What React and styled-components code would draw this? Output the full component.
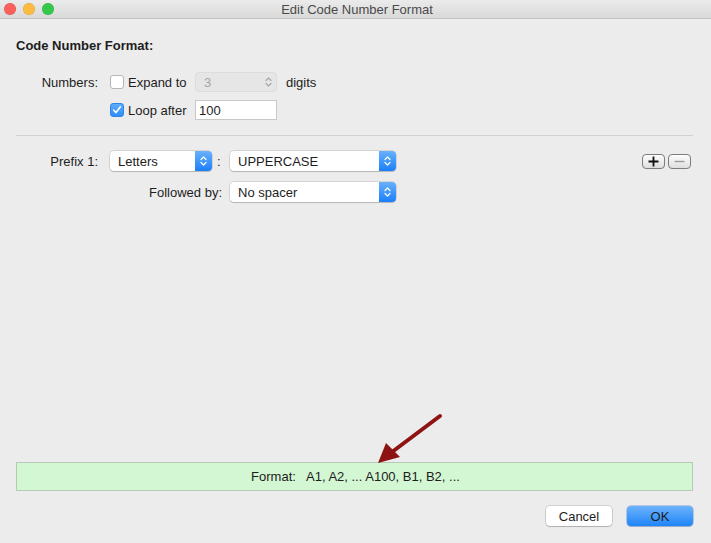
import React from 'react'
import styled, { createGlobalStyle } from 'styled-components'

const Global = createGlobalStyle`
  html, body { margin:0; padding:0; }
  body {
    font-family:"Liberation Sans", Arial, sans-serif;
    font-size:13px;
    color:#1d1d1d;
    background:#ececec;
  }
`

const Window = styled.div`
  position:relative;
  width:711px;
  height:543px;
  display:flex;
  flex-direction:column;
  background:#ececec;
  overflow:hidden;
`
const TitleBar = styled.div`
  height:18px;
  flex-shrink:0;
  display:grid;
  grid-template-columns:80px 1fr 80px;
  align-items:center;
  background:linear-gradient(#ebebeb, #d9d9d9);
  border-bottom:1px solid #c4c4c4;
`
const Lights = styled.div`
  display:flex;
  gap:7px;
  padding-left:4px;
`
const Light = styled.span`
  width:12px;
  height:12px;
  border-radius:50%;
  background:${({c})=>c};
  box-shadow:inset 0 0 0 0.5px rgba(0,0,0,0.15);
`
const Title = styled.div`
  text-align:center;
  color:#4a4a4a;
  font-size:13px;
  padding-left:3px;
`
const Content = styled.div`
  flex:1;
  display:flex;
  flex-direction:column;
  padding:19px 18px 17px 16px;
`
const Heading = styled.div`
  font-weight:bold;
  line-height:16px;
  margin-bottom:18px;
`
const NumberGrid = styled.div`
  display:grid;
  grid-template-columns:94px 85px 82px auto;
  grid-auto-rows:20px;
  row-gap:8px;
  align-items:center;
`
const Label = styled.div`
  text-align:right;
  padding-right:${({pr})=>pr ?? 12}px;
  grid-column:${({span})=>span || 'auto'};
  white-space:nowrap;
`
const CheckLabel = styled.label`
  display:flex;
  align-items:center;
  gap:4px;
  grid-column:${({col})=>col || 'auto'};
`
const Box = styled.span`
  width:14px;
  height:14px;
  box-sizing:border-box;
  border-radius:3px;
  display:flex;
  align-items:center;
  justify-content:center;
  background:${({checked})=>checked ? 'linear-gradient(#5eacfc,#2f8df8)' : '#fff'};
  border:1px solid ${({checked})=>checked ? '#2f84e8' : '#b5b5b5'};
`
const Stepper = styled.div`
  height:20px;
  box-sizing:border-box;
  border-radius:4px;
  background:#e6e6e6;
  border:1px solid #dcdcdc;
  display:flex;
  align-items:center;
  justify-content:space-between;
  padding:0 4px 0 8px;
  color:#a5a5a5;
`
const Field = styled.div`
  height:20px;
  box-sizing:border-box;
  background:#fff;
  border:1px solid #c8c8c8;
  display:flex;
  align-items:center;
  padding-left:3px;
`
const Suffix = styled.span`
  padding-left:9px;
`
const Separator = styled.div`
  height:1px;
  background:#d1d1d1;
  margin:15px 0 15px;
`
const PrefixGrid = styled.div`
  display:grid;
  grid-template-columns:94px 102px 18px 166px 1fr auto;
  grid-auto-rows:20px;
  row-gap:11px;
  align-items:center;
`
const Colon = styled.span`
  padding-left:5px;
`
const Select = styled.div`
  height:20px;
  box-sizing:border-box;
  border-radius:4px;
  background:#fff;
  box-shadow:0 0 0 0.5px rgba(0,0,0,0.2), 0 1px 1px rgba(0,0,0,0.15);
  display:flex;
  align-items:center;
  justify-content:space-between;
  padding-left:8px;
  overflow:hidden;
  grid-column:${({col})=>col || 'auto'};
`
const Cap = styled.span`
  width:17px;
  height:20px;
  display:flex;
  align-items:center;
  justify-content:center;
  background:linear-gradient(#69b1fb,#1b7ffa);
`
const SmallButtons = styled.div`
  display:flex;
  gap:3px;
  padding-top:1px;
  margin-right:2px;
`
const SmallButton = styled.span`
  width:23px;
  height:15px;
  box-sizing:border-box;
  border-radius:4px;
  border:1px solid #7c7c7c;
  background:linear-gradient(#fdfdfd,#dedede);
  display:flex;
  align-items:center;
  justify-content:center;
`
const Spacer = styled.div`
  flex:1;
`
const FormatBar = styled.div`
  height:29px;
  box-sizing:border-box;
  background:#d3f6d3;
  border:1px solid #b9c9b9;
  display:flex;
  align-items:center;
  justify-content:center;
  padding-left:2px;
  white-space:pre;
`
const Actions = styled.div`
  display:flex;
  justify-content:flex-end;
  gap:15px;
  margin-top:15px;
`
const Button = styled.button`
  width:66px;
  height:20px;
  border:none;
  border-radius:4px;
  font-family:inherit;
  font-size:13px;
  color:#1d1d1d;
  padding:0;
  background:${({primary})=>primary ? 'linear-gradient(#6cb3fb,#1f84f8)' : '#fff'};
  box-shadow:${({primary})=>primary
    ? '0 0 0 0.5px rgba(20,90,200,0.5), 0 1px 1px rgba(0,0,0,0.15)'
    : '0 0 0 0.5px rgba(0,0,0,0.25), 0 1px 1px rgba(0,0,0,0.15)'};
`
const Arrow = styled.svg`
  position:absolute;
  left:370px;
  top:410px;
  pointer-events:none;
`

const Check = () => (
  <svg width="10" height="10" viewBox="0 0 10 10">
    <path d="M1.8 5.2 L4 7.6 L8.4 1.8" fill="none" stroke="#fff" strokeWidth="1.6" strokeLinecap="round" strokeLinejoin="round"/>
  </svg>
)

const Updown = ({color}) => (
  <svg width="7" height="12" viewBox="0 0 7 12">
    <path d="M1 4.5 L3.5 2 L6 4.5 M1 7.5 L3.5 10 L6 7.5" fill="none" stroke={color} strokeWidth="1.2" strokeLinecap="round" strokeLinejoin="round"/>
  </svg>
)

const Popup = ({children, col}) => (
  <Select col={col}>
    <span>{children}</span>
    <Cap><Updown color="#fff"/></Cap>
  </Select>
)

const App = () => {
  return (
    <Window>
      <Global/>
      <TitleBar>
        <Lights>
          <Light c="#fc605c"/>
          <Light c="#fdbc40"/>
          <Light c="#34c84a"/>
        </Lights>
        <Title>Edit Code Number Format</Title>
        <span/>
      </TitleBar>
      <Content>
        <Heading>Code Number Format:</Heading>
        <NumberGrid>
          <Label>Numbers:</Label>
          <CheckLabel><Box/>Expand to</CheckLabel>
          <Stepper><span>3</span><Updown color="#a8a8a8"/></Stepper>
          <Suffix>digits</Suffix>
          <CheckLabel col="2"><Box checked><Check/></Box>Loop after</CheckLabel>
          <Field>100</Field>
        </NumberGrid>
        <Separator/>
        <PrefixGrid>
          <Label>Prefix 1:</Label>
          <Popup>Letters</Popup>
          <Colon>:</Colon>
          <Popup>UPPERCASE</Popup>
          <span/>
          <SmallButtons>
            <SmallButton>
              <svg width="11" height="11" viewBox="0 0 11 11">
                <path d="M5.5 0.5 V10.5 M0.5 5.5 H10.5" stroke="#111" strokeWidth="1.8"/>
              </svg>
            </SmallButton>
            <SmallButton>
              <svg width="11" height="11" viewBox="0 0 11 11">
                <path d="M0.5 5.5 H10.5" stroke="#9a9a9a" strokeWidth="1.4"/>
              </svg>
            </SmallButton>
          </SmallButtons>
          <Label span="1 / 4" pr={8}>Followed by:</Label>
          <Popup col="4">No spacer</Popup>
        </PrefixGrid>
        <Spacer/>
        <FormatBar>{'Format:   A1, A2, ... A100, B1, B2, ...'}</FormatBar>
        <Actions>
          <Button>Cancel</Button>
          <Button primary>OK</Button>
        </Actions>
      </Content>
      <Arrow width="80" height="60" viewBox="0 0 80 60">
        <path d="M70 6 L22 42" stroke="#8e1414" strokeWidth="4" strokeLinecap="round"/>
        <path d="M8 53 L16 33 L30 47 Z" fill="#8e1414"/>
      </Arrow>
    </Window>
  )
}

export default App
